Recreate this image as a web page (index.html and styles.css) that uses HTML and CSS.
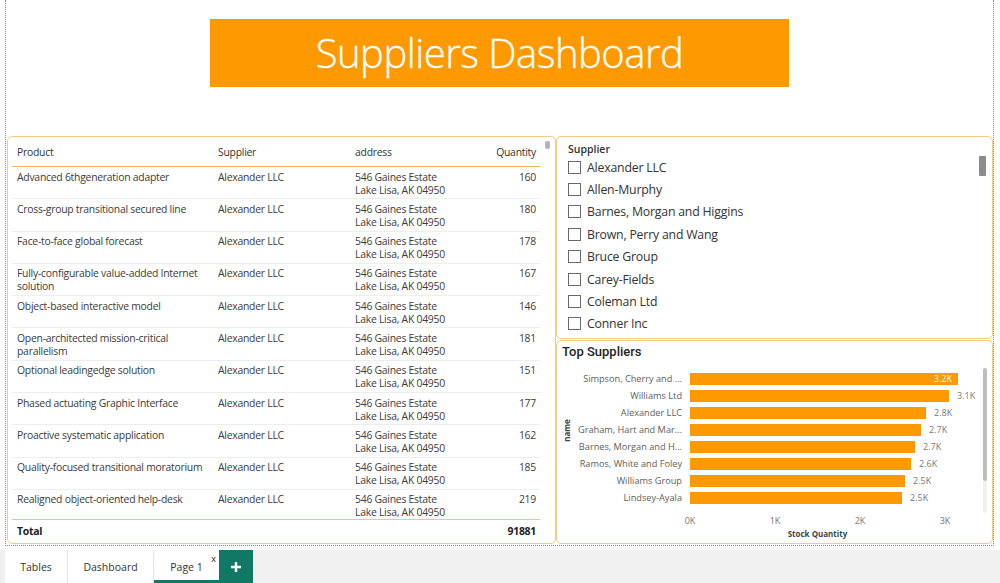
FILE: index.html
```html
<!DOCTYPE html>
<html lang="en">
<head>
<meta charset="utf-8">
<title>Suppliers Dashboard</title>
<link rel="stylesheet" href="styles.css">
</head>
<body>
<div class="canvas">
  <header class="title-wrap">
    <div class="title-box">Suppliers Dashboard</div>
  </header>
  <main class="grid">
    <section class="card table-card">
      <span class="vscroll"></span>
      <div class="tbl">
        <div class="tr thead">
          <div class="td">Product</div><div class="td">Supplier</div><div class="td">address</div><div class="td num">Quantity</div>
        </div>
        <div class="tbody">
          <div class="tr"><div class="td">Advanced 6thgeneration adapter</div><div class="td">Alexander LLC</div><div class="td">546 Gaines Estate<br>Lake Lisa, AK 04950</div><div class="td num">160</div></div>
          <div class="tr"><div class="td">Cross-group transitional secured line</div><div class="td">Alexander LLC</div><div class="td">546 Gaines Estate<br>Lake Lisa, AK 04950</div><div class="td num">180</div></div>
          <div class="tr"><div class="td">Face-to-face global forecast</div><div class="td">Alexander LLC</div><div class="td">546 Gaines Estate<br>Lake Lisa, AK 04950</div><div class="td num">178</div></div>
          <div class="tr"><div class="td">Fully-configurable value-added Internet solution</div><div class="td">Alexander LLC</div><div class="td">546 Gaines Estate<br>Lake Lisa, AK 04950</div><div class="td num">167</div></div>
          <div class="tr"><div class="td">Object-based interactive model</div><div class="td">Alexander LLC</div><div class="td">546 Gaines Estate<br>Lake Lisa, AK 04950</div><div class="td num">146</div></div>
          <div class="tr"><div class="td">Open-architected mission-critical parallelism</div><div class="td">Alexander LLC</div><div class="td">546 Gaines Estate<br>Lake Lisa, AK 04950</div><div class="td num">181</div></div>
          <div class="tr"><div class="td">Optional leadingedge solution</div><div class="td">Alexander LLC</div><div class="td">546 Gaines Estate<br>Lake Lisa, AK 04950</div><div class="td num">151</div></div>
          <div class="tr"><div class="td">Phased actuating Graphic Interface</div><div class="td">Alexander LLC</div><div class="td">546 Gaines Estate<br>Lake Lisa, AK 04950</div><div class="td num">177</div></div>
          <div class="tr"><div class="td">Proactive systematic application</div><div class="td">Alexander LLC</div><div class="td">546 Gaines Estate<br>Lake Lisa, AK 04950</div><div class="td num">162</div></div>
          <div class="tr"><div class="td">Quality-focused transitional moratorium</div><div class="td">Alexander LLC</div><div class="td">546 Gaines Estate<br>Lake Lisa, AK 04950</div><div class="td num">185</div></div>
          <div class="tr"><div class="td">Realigned object-oriented help-desk</div><div class="td">Alexander LLC</div><div class="td">546 Gaines Estate<br>Lake Lisa, AK 04950</div><div class="td num">219</div></div>
        </div>
        <div class="tr tfoot">
          <div class="td">Total</div><div class="td"></div><div class="td"></div><div class="td num">91881</div>
        </div>
      </div>
    </section>

    <div class="right-col">
      <section class="card slicer">
        <span class="slicer-thumb"></span>
        <div class="slicer-title">Supplier</div>
        <ul class="slicer-list">
          <li><span class="box"></span>Alexander LLC</li>
          <li><span class="box"></span>Allen-Murphy</li>
          <li><span class="box"></span>Barnes, Morgan and Higgins</li>
          <li><span class="box"></span>Brown, Perry and Wang</li>
          <li><span class="box"></span>Bruce Group</li>
          <li><span class="box"></span>Carey-Fields</li>
          <li><span class="box"></span>Coleman Ltd</li>
          <li><span class="box"></span>Conner Inc</li>
        </ul>
      </section>

      <section class="card chart">
        <span class="chart-scroll"><span class="chart-thumb"></span></span>
        <div class="chart-title">Top Suppliers</div>
        <div class="chart-body">
          <div class="y-title"><span>name</span></div>
          <div class="plot">
            <div class="bar-row"><span class="cat">Simpson, Cherry and ...</span><span class="track"><span class="bar" style="width:268px"><span class="val inside">3.2K</span></span></span></div>
            <div class="bar-row"><span class="cat">Williams Ltd</span><span class="track"><span class="bar" style="width:259px"></span><span class="val">3.1K</span></span></div>
            <div class="bar-row"><span class="cat">Alexander LLC</span><span class="track"><span class="bar" style="width:236px"></span><span class="val">2.8K</span></span></div>
            <div class="bar-row"><span class="cat">Graham, Hart and Mar...</span><span class="track"><span class="bar" style="width:231px"></span><span class="val">2.7K</span></span></div>
            <div class="bar-row"><span class="cat">Barnes, Morgan and H...</span><span class="track"><span class="bar" style="width:225px"></span><span class="val">2.7K</span></span></div>
            <div class="bar-row"><span class="cat">Ramos, White and Foley</span><span class="track"><span class="bar" style="width:221px"></span><span class="val">2.6K</span></span></div>
            <div class="bar-row"><span class="cat">Williams Group</span><span class="track"><span class="bar" style="width:215px"></span><span class="val">2.5K</span></span></div>
            <div class="bar-row"><span class="cat">Lindsey-Ayala</span><span class="track"><span class="bar" style="width:212px"></span><span class="val">2.5K</span></span></div>
            <div class="x-axis">
              <span class="tick"><span>0K</span></span>
              <span class="tick"><span>1K</span></span>
              <span class="tick"><span>2K</span></span>
              <span class="tick"><span>3K</span></span>
            </div>
            <div class="x-title">Stock Quantity</div>
          </div>
        </div>
      </section>
    </div>
  </main>
</div>

<footer class="tabs">
  <div class="tab">Tables</div>
  <div class="tab">Dashboard</div>
  <div class="tab active">Page 1<span class="close">x</span></div>
  <div class="tab-add">
    <svg width="12" height="12" viewBox="0 0 12 12"><path d="M6 1v10M1 6h10" stroke="#fff" stroke-width="2.4" fill="none"/></svg>
  </div>
</footer>
</body>
</html>
```

FILE: styles.css
```css
* { box-sizing: border-box; }
html, body { margin: 0; padding: 0; background: #fff; }
body {
  font-family: "Open Sans", "Noto Sans", "Liberation Sans", sans-serif;
  color: #333;
  width: 1000px;
  height: 583px;
  overflow: hidden;
}

.canvas {
  margin-left: 5px;
  width: 989px;
  height: 546px;
  border-left: 1px dotted #8a8a8a;
  border-right: 1px dotted #8a8a8a;
  border-bottom: 1px dotted #8a8a8a;
  display: flex;
  flex-direction: column;
}

.title-wrap {
  height: 136px;
  padding-top: 19px;
  display: flex;
  justify-content: center;
}
.title-box {
  width: 579px;
  height: 68px;
  background: #fe9a00;
  color: #fff;
  font-weight: 300;
  font-size: 40px;
  display: flex;
  align-items: center;
  justify-content: center;
  letter-spacing: -0.5px;
  padding-bottom: 2px;
  -webkit-text-stroke: 0.3px #fff;
}

.grid {
  display: grid;
  grid-template-columns: 549px 437px;
  padding-left: 1px;
  height: 408px;
}

.card {
  border: 1px solid #f8c980;
  border-radius: 5px;
  background: #fff;
  position: relative;
  overflow: hidden;
}

/* ---------- table ---------- */
.table-card { padding: 0 14px 0 4px; }
.vscroll {
  position: absolute;
  left: 537px;
  top: 4px;
  width: 5px;
  height: 8px;
  border-radius: 2px;
  background: #b5b5b5;
}
.tbl {
  width: 528px;
  font-size: 10.4px;
  letter-spacing: -0.25px;
  color: #3b3b3b;
  line-height: 13px;
}
.tr {
  display: grid;
  grid-template-columns: 201px 137px 130px 60px;
}
.td { padding: 0 4px 0 5px; }
.num { text-align: right; }
.thead {
  height: 30px;
  align-items: center;
  border-bottom: 1px solid #f4b860;
  color: #333;
  padding-top: 1px;
}
.tbody {
  height: 352px;
  overflow: hidden;
}
.tbody .tr {
  height: 32.3px;
  padding-top: 3.5px;
  border-bottom: 1px solid #eeeeee;
}
.tfoot {
  height: 24px;
  align-items: center;
  border-top: 1px solid #f4c57c;
  font-weight: 700;
  color: #222;
}

/* ---------- slicer ---------- */
.right-col {
  display: flex;
  flex-direction: column;
  gap: 1px;
}
.slicer {
  height: 203px;
  padding: 5px 0 0 11px;
}
.slicer-title {
  font-size: 10.5px;
  font-weight: 600;
  line-height: 14px;
  color: #333;
  height: 14px;
}
.slicer-list {
  list-style: none;
  margin: 0;
  padding: 0;
}
.slicer-list li {
  height: 22.4px;
  display: flex;
  align-items: center;
  font-size: 12.3px;
  letter-spacing: -0.2px;
  color: #333;
}
.box {
  width: 13px;
  height: 13px;
  border: 1px solid #6a6a6a;
  margin-right: 6px;
  flex: none;
}
.slicer-thumb {
  position: absolute;
  left: 422px;
  top: 19px;
  width: 7px;
  height: 20px;
  background: #8c8c8c;
  border-radius: 1px;
}

/* ---------- chart ---------- */
.chart {
  height: 204px;
  padding: 3px 0 0 5px;
  display: flex;
  flex-direction: column;
}
.chart-title {
  font-family: "Roboto", "Noto Sans", sans-serif;
  font-size: 13px;
  font-weight: 500;
  color: #252423;
  line-height: 16px;
  height: 22px;
}
.chart-body {
  display: flex;
  flex: 1;
}
.y-title {
  width: 9px;
  display: flex;
  align-items: center;
  justify-content: center;
  padding-bottom: 48px;
}
.y-title span {
  transform: rotate(-90deg);
  font-size: 8px;
  font-weight: 700;
  color: #444;
  white-space: nowrap;
}
.plot {
  padding-top: 4px;
  display: flex;
  flex-direction: column;
}
.bar-row {
  display: flex;
  align-items: center;
  height: 17px;
}
.cat {
  width: 119px;
  text-align: right;
  font-size: 9.2px;
  color: #605e5c;
  padding-right: 8px;
  white-space: nowrap;
}
.track {
  display: flex;
  align-items: center;
  width: 290px;
}
.bar {
  height: 12px;
  background: #fe9a00;
  display: flex;
  align-items: center;
  justify-content: flex-end;
}
.val {
  font-size: 9px;
  color: #7a7a7a;
  margin-left: 8px;
}
.val.inside {
  color: #fff;
  margin: 0 6px 0 0;
}
.x-axis {
  display: flex;
  margin-left: 119px;
  margin-top: 8px;
  height: 12px;
}
.tick {
  width: 85px;
  position: relative;
  font-size: 9px;
  color: #777;
}
.tick span {
  display: inline-block;
  transform: translateX(-50%);
}
.x-title {
  margin-left: 119px;
  width: 255px;
  text-align: center;
  font-size: 8px;
  font-weight: 700;
  color: #444;
  margin-top: 2px;
}
.chart-scroll {
  position: absolute;
  left: 426px;
  top: 27px;
  width: 4px;
  height: 145px;
  background: #f1f1f1;
  border-radius: 2px;
}
.chart-thumb {
  display: block;
  width: 4px;
  height: 113px;
  background: #bdbdbd;
  border-radius: 2px;
}

/* ---------- tabs ---------- */
.tabs {
  margin-top: 4px;
  height: 33px;
  background: #f0f0f0;
  display: flex;
  padding-left: 5px;
}
.tab {
  background: #fff;
  font-size: 10.5px;
  color: #333;
  display: flex;
  align-items: center;
  justify-content: center;
  border-right: 1px solid #e3e3e3;
  position: relative;
}
.tab:nth-child(1) { width: 63px; }
.tab:nth-child(2) { width: 86px; }
.tab.active {
  width: 65px;
  border-right: none;
  border-bottom: 3px solid #117865;
  padding-top: 3px;
}
.close {
  position: absolute;
  right: 3px;
  top: 2px;
  font-size: 9px;
  color: #222;
}
.tab-add {
  width: 34px;
  background: #117865;
  display: flex;
  align-items: center;
  justify-content: center;
}
```
